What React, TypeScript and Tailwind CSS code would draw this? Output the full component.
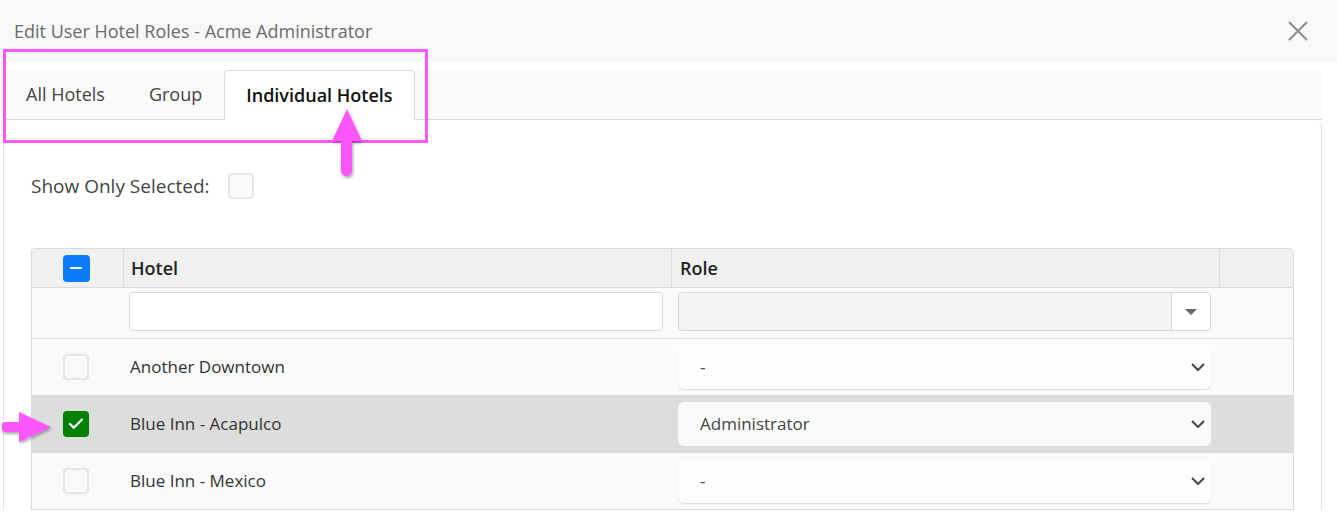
import { Check, Minus } from "lucide-react";

const ROWS = [
  { name: "Another Downtown", role: "-", selected: false },
  { name: "Blue Inn - Acapulco", role: "Administrator", selected: true },
  { name: "Blue Inn - Mexico", role: "-", selected: false },
];

const GRID = "grid grid-cols-[91px_548px_548px_1fr]";

function Box({ checked }: { checked: boolean }) {
  if (checked) {
    return (
      <span className="flex h-[26px] w-[26px] items-center justify-center rounded-[4px] bg-[#008000]">
        <Check className="h-[18px] w-[18px] text-white" strokeWidth={3} />
      </span>
    );
  }
  return <span className="block h-[26px] w-[26px] rounded-[4px] border-2 border-[#e6e6e6] bg-[#fafafa]" />;
}

function Arrows() {
  return (
    <svg className="pointer-events-none absolute left-0 top-0" width="440" height="460" viewBox="0 0 440 460">
      <defs>
        <filter id="sh" x="-50%" y="-50%" width="200%" height="200%">
          <feDropShadow dx="1" dy="2" stdDeviation="1.5" floodColor="#000" floodOpacity="0.35" />
        </filter>
      </defs>
      {/* up arrow under the active tab */}
      <g filter="url(#sh)" fill="#ff55ff">
        <polygon points="347,109 362,141 332,141" />
        <rect x="341" y="138" width="11" height="38" rx="5.5" />
      </g>
      {/* right arrow at the checked row */}
      <g filter="url(#sh)" fill="#ff55ff">
        <polygon points="51,427 19,412 19,442" />
        <rect x="2" y="422" width="22" height="10" rx="3" />
      </g>
    </svg>
  );
}

export default function App() {
  return (
    <div className="relative min-h-[515px] w-full bg-white font-['Open_Sans',sans-serif] text-[#333]">
      {/* Title bar */}
      <div className="flex h-[62px] items-center justify-between bg-[#f7f8fa] pl-[14px] pr-[29px]">
        <h2 className="text-[18px] text-[#6b6b6b]">Edit User Hotel Roles - Acme Administrator</h2>
        <svg width="20" height="20" viewBox="0 0 20 20" className="text-[#8c8c8c]">
          <path d="M1 1L19 19M19 1L1 19" stroke="currentColor" strokeWidth="2" />
        </svg>
      </div>

      <div className="pl-[3px] pr-[15px] pt-[8px]">
        {/* Tabs */}
        <div className="flex h-[50px] items-end rounded-t-[6px] border-b border-[#d9d9d9] bg-[#fafafa] pl-px">
          <div className="flex h-[49px] items-center px-[22px] text-[18px] text-[#444]">All Hotels</div>
          <div className="flex h-[49px] items-center px-[22px] text-[18px] text-[#444]">Group</div>
          <div className="-mb-px flex h-[50px] items-center rounded-t-[5px] border-x border-t border-[#d9d9d9] bg-white px-[21px] text-[18px] font-semibold text-[#111]">
            Individual Hotels
          </div>
        </div>

        {/* Body */}
        <div className="rounded-tr-[6px] border-x border-[#e2e2e2] px-[27px] pt-[53px]">
          <div className="flex h-[26px] items-center gap-[18px]">
            <span className="text-[19px] text-[#444]">Show Only Selected:</span>
            <Box checked={false} />
          </div>

          <div className="mt-[49px] rounded-t-[4px] border-x border-t border-[#d8dbe0]">
            {/* Header */}
            <div className={`${GRID} h-[39px] border-b border-[#d8dbe0] bg-[#f0f0f0]`}>
              <div className="flex items-center justify-center pr-[3px]">
                <span className="flex h-[27px] w-[27px] items-center justify-center rounded-[4px] bg-[#0a7cff]">
                  <Minus className="h-[18px] w-[18px] text-white" strokeWidth={2.5} />
                </span>
              </div>
              <div className="flex items-center border-l border-[#d8dbe0] pl-[7px] text-[18px] font-semibold text-[#222]">Hotel</div>
              <div className="flex items-center border-l border-[#d8dbe0] pl-[8px] text-[18px] font-semibold text-[#222]">Role</div>
              <div className="border-l border-[#d8dbe0]" />
            </div>

            {/* Filter row */}
            <div className={`${GRID} h-[51px] border-b border-[#d8dbe0] bg-[#fafafa]`}>
              <div />
              <div className="pl-[6px] pr-[8px] pt-[4px]">
                <div className="h-[39px] rounded-[4px] border border-[#d5d8dc] bg-white" />
              </div>
              <div className="pl-[7px] pr-[8px] pt-[4px]">
                <div className="flex h-[39px] overflow-hidden rounded-[4px] border border-[#d5d8dc]">
                  <div className="flex-1 bg-[#f5f5f5]" />
                  <div className="flex w-[39px] items-center justify-center border-l border-[#d5d8dc] bg-white">
                    <svg width="12" height="6" viewBox="0 0 12 6">
                      <path d="M0 0H12L6 6Z" fill="#666" />
                    </svg>
                  </div>
                </div>
              </div>
              <div />
            </div>

            {/* Rows */}
            {ROWS.map((r) => (
              <div
                key={r.name}
                className={`${GRID} h-[57px] border-b border-[#d8dbe0] ${r.selected ? "bg-[#dcdddc]" : "bg-[#fafafa]"}`}
              >
                <div className="flex items-center justify-center pr-[3px]">
                  <Box checked={r.selected} />
                </div>
                <div className="flex items-center pl-[7px] text-[17px] text-[#333]">{r.name}</div>
                <div className="flex items-center pl-[7px] pr-[8px]">
                  <div
                    className={`flex h-[44px] w-full items-center justify-between rounded-[6px] pl-[22px] pr-[6px] text-[17px] text-[#444] ${
                      r.selected ? "bg-[#fafafa]" : "bg-[#fdfdfd] shadow-[0_1px_1px_rgba(0,0,0,0.13)]"
                    }`}
                  >
                    <span>{r.role}</span>
                    <svg width="14" height="8" viewBox="0 0 14 8" className="text-[#444]">
                      <path d="M1 1L7 7L13 1" fill="none" stroke="currentColor" strokeWidth="2" />
                    </svg>
                  </div>
                </div>
                <div />
              </div>
            ))}
          </div>
        </div>
      </div>

      {/* Annotation overlay */}
      <div className="pointer-events-none absolute left-[3px] top-[49px] h-[94px] w-[425px] border-[3px] border-[#ff55ff]" />
      <Arrows />
    </div>
  );
}
